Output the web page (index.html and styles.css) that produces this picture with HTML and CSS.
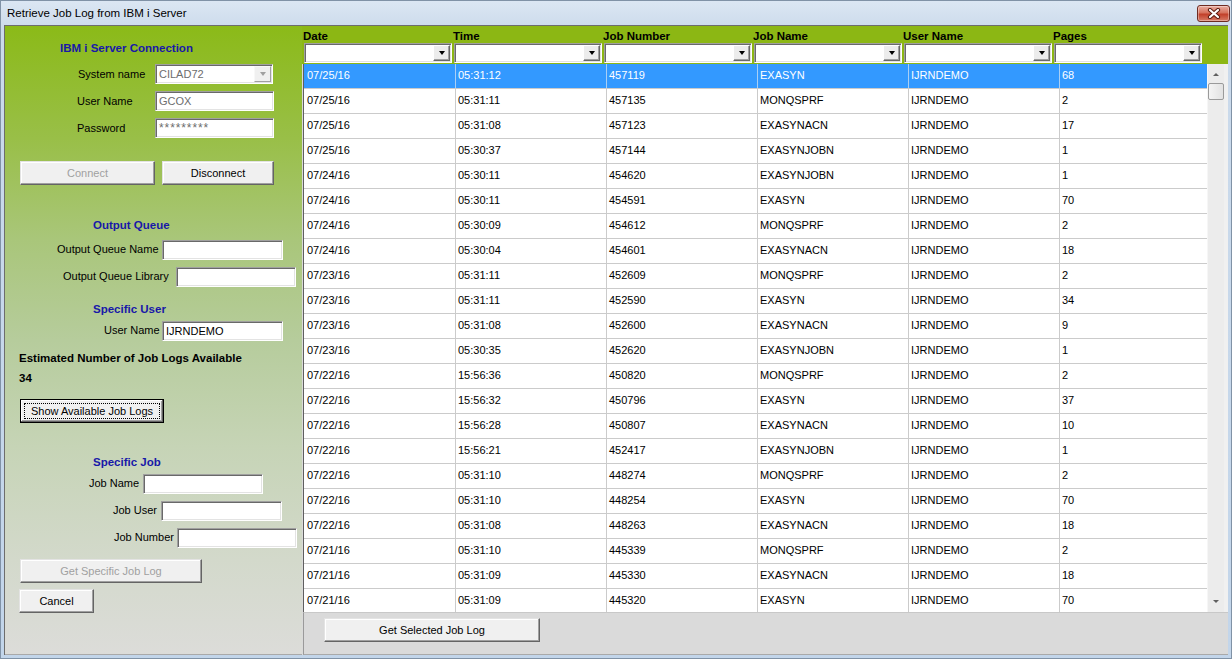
FILE: index.html
```html
<!DOCTYPE html>
<html>
<head>
<meta charset="utf-8">
<title>Retrieve Job Log from IBM i Server</title>
<link rel="stylesheet" href="styles.css">
</head>
<body>
<div class="window">
  <div class="titlebar">
    <span class="title">Retrieve Job Log from IBM i Server</span>
    <div class="close">
      <svg width="14" height="11" viewBox="0 0 14 11"><path d="M3 2 L11 9 M11 2 L3 9" stroke="#5b1b10" stroke-width="4.2" stroke-linecap="round"/><path d="M3 2 L11 9 M11 2 L3 9" stroke="#ffffff" stroke-width="2.2" stroke-linecap="round"/></svg>
    </div>
  </div>
  <div class="client">
    <div class="left">
      <div class="heading h-conn">IBM i Server Connection</div>
      <div class="field f-sys"><span class="lbl">System name</span><div class="combo dis"><span class="val">CILAD72</span><span class="drop"><i class="tri"></i></span></div></div>
      <div class="field f-user"><span class="lbl">User Name</span><div class="input dis">GCOX</div></div>
      <div class="field f-pw"><span class="lbl">Password</span><div class="input dis pw">*********</div></div>
      <div class="btnrow r-conn"><button class="btn b-connect" disabled>Connect</button><button class="btn b-disc">Disconnect</button></div>

      <div class="heading h-oq">Output Queue</div>
      <div class="field f-oqn"><span class="lbl">Output Queue Name</span><div class="input"></div></div>
      <div class="field f-oql"><span class="lbl">Output Queue Library</span><div class="input"></div></div>

      <div class="heading h-su">Specific User</div>
      <div class="field f-su"><span class="lbl">User Name</span><div class="input">IJRNDEMO</div></div>

      <div class="est">Estimated Number of Job Logs Available</div>
      <div class="est est-n">34</div>
      <div class="btnrow r-show"><button class="btn b-show focus">Show Available Job Logs</button></div>

      <div class="heading h-sj">Specific Job</div>
      <div class="field f-jn"><span class="lbl">Job Name</span><div class="input"></div></div>
      <div class="field f-ju"><span class="lbl">Job User</span><div class="input"></div></div>
      <div class="field f-jnum"><span class="lbl">Job Number</span><div class="input"></div></div>
      <div class="btnrow r-spec"><button class="btn b-spec" disabled>Get Specific Job Log</button></div>
      <div class="btnrow r-cancel"><button class="btn b-cancel">Cancel</button></div>
    </div>

    <div class="right">
      <div class="gridhead">
        <div class="hcols">
          <div class="hcol">Date</div>
          <div class="hcol">Time</div>
          <div class="hcol">Job Number</div>
          <div class="hcol">Job Name</div>
          <div class="hcol">User Name</div>
          <div class="hcol">Pages</div>
        </div>
        <div class="filters">
          <div class="fcell"><div class="fcombo"><span class="drop"><i class="tri"></i></span></div></div>
          <div class="fcell"><div class="fcombo"><span class="drop"><i class="tri"></i></span></div></div>
          <div class="fcell"><div class="fcombo"><span class="drop"><i class="tri"></i></span></div></div>
          <div class="fcell"><div class="fcombo"><span class="drop"><i class="tri"></i></span></div></div>
          <div class="fcell"><div class="fcombo"><span class="drop"><i class="tri"></i></span></div></div>
          <div class="fcell"><div class="fcombo"><span class="drop"><i class="tri"></i></span></div></div>
        </div>
      </div>

      <div class="gridbody">
        <div class="rows">
          <div class="row sel"><div class="c c1">07/25/16</div><div class="c">05:31:12</div><div class="c">457119</div><div class="c">EXASYN</div><div class="c">IJRNDEMO</div><div class="c c6">68</div></div>
          <div class="row"><div class="c c1">07/25/16</div><div class="c">05:31:11</div><div class="c">457135</div><div class="c">MONQSPRF</div><div class="c">IJRNDEMO</div><div class="c c6">2</div></div>
          <div class="row"><div class="c c1">07/25/16</div><div class="c">05:31:08</div><div class="c">457123</div><div class="c">EXASYNACN</div><div class="c">IJRNDEMO</div><div class="c c6">17</div></div>
          <div class="row"><div class="c c1">07/25/16</div><div class="c">05:30:37</div><div class="c">457144</div><div class="c">EXASYNJOBN</div><div class="c">IJRNDEMO</div><div class="c c6">1</div></div>
          <div class="row"><div class="c c1">07/24/16</div><div class="c">05:30:11</div><div class="c">454620</div><div class="c">EXASYNJOBN</div><div class="c">IJRNDEMO</div><div class="c c6">1</div></div>
          <div class="row"><div class="c c1">07/24/16</div><div class="c">05:30:11</div><div class="c">454591</div><div class="c">EXASYN</div><div class="c">IJRNDEMO</div><div class="c c6">70</div></div>
          <div class="row"><div class="c c1">07/24/16</div><div class="c">05:30:09</div><div class="c">454612</div><div class="c">MONQSPRF</div><div class="c">IJRNDEMO</div><div class="c c6">2</div></div>
          <div class="row"><div class="c c1">07/24/16</div><div class="c">05:30:04</div><div class="c">454601</div><div class="c">EXASYNACN</div><div class="c">IJRNDEMO</div><div class="c c6">18</div></div>
          <div class="row"><div class="c c1">07/23/16</div><div class="c">05:31:11</div><div class="c">452609</div><div class="c">MONQSPRF</div><div class="c">IJRNDEMO</div><div class="c c6">2</div></div>
          <div class="row"><div class="c c1">07/23/16</div><div class="c">05:31:11</div><div class="c">452590</div><div class="c">EXASYN</div><div class="c">IJRNDEMO</div><div class="c c6">34</div></div>
          <div class="row"><div class="c c1">07/23/16</div><div class="c">05:31:08</div><div class="c">452600</div><div class="c">EXASYNACN</div><div class="c">IJRNDEMO</div><div class="c c6">9</div></div>
          <div class="row"><div class="c c1">07/23/16</div><div class="c">05:30:35</div><div class="c">452620</div><div class="c">EXASYNJOBN</div><div class="c">IJRNDEMO</div><div class="c c6">1</div></div>
          <div class="row"><div class="c c1">07/22/16</div><div class="c">15:56:36</div><div class="c">450820</div><div class="c">MONQSPRF</div><div class="c">IJRNDEMO</div><div class="c c6">2</div></div>
          <div class="row"><div class="c c1">07/22/16</div><div class="c">15:56:32</div><div class="c">450796</div><div class="c">EXASYN</div><div class="c">IJRNDEMO</div><div class="c c6">37</div></div>
          <div class="row"><div class="c c1">07/22/16</div><div class="c">15:56:28</div><div class="c">450807</div><div class="c">EXASYNACN</div><div class="c">IJRNDEMO</div><div class="c c6">10</div></div>
          <div class="row"><div class="c c1">07/22/16</div><div class="c">15:56:21</div><div class="c">452417</div><div class="c">EXASYNJOBN</div><div class="c">IJRNDEMO</div><div class="c c6">1</div></div>
          <div class="row"><div class="c c1">07/22/16</div><div class="c">05:31:10</div><div class="c">448274</div><div class="c">MONQSPRF</div><div class="c">IJRNDEMO</div><div class="c c6">2</div></div>
          <div class="row"><div class="c c1">07/22/16</div><div class="c">05:31:10</div><div class="c">448254</div><div class="c">EXASYN</div><div class="c">IJRNDEMO</div><div class="c c6">70</div></div>
          <div class="row"><div class="c c1">07/22/16</div><div class="c">05:31:08</div><div class="c">448263</div><div class="c">EXASYNACN</div><div class="c">IJRNDEMO</div><div class="c c6">18</div></div>
          <div class="row"><div class="c c1">07/21/16</div><div class="c">05:31:10</div><div class="c">445339</div><div class="c">MONQSPRF</div><div class="c">IJRNDEMO</div><div class="c c6">2</div></div>
          <div class="row"><div class="c c1">07/21/16</div><div class="c">05:31:09</div><div class="c">445330</div><div class="c">EXASYNACN</div><div class="c">IJRNDEMO</div><div class="c c6">18</div></div>
          <div class="row"><div class="c c1">07/21/16</div><div class="c">05:31:09</div><div class="c">445320</div><div class="c">EXASYN</div><div class="c">IJRNDEMO</div><div class="c c6">70</div></div>
        </div>
        <div class="vscroll">
          <div class="sb-btn"><i class="tri-up"></i></div>
          <div class="thumb"></div>
          <div class="sb-track"></div>
          <div class="sb-btn"><i class="tri-down"></i></div>
        </div>
        <div class="filler"></div>
      </div>

      <div class="bottombar">
        <button class="btn b-getsel">Get Selected Job Log</button>
      </div>
    </div>
  </div>
</div>
</body>
</html>
```

FILE: styles.css
```css
* { box-sizing: border-box; }
html, body { margin: 0; padding: 0; }
body {
  width: 1232px;
  height: 659px;
  overflow: hidden;
  font-family: "Liberation Sans", Arial, sans-serif;
  font-size: 11px;
  color: #000;
  background: #c4d6ea;
}
.window {
  width: 1232px;
  height: 659px;
  display: flex;
  flex-direction: column;
  background: linear-gradient(#dce7f3, #cbdaeb 30px, #c2d5ea);
  box-shadow: inset 0 0 0 1px #8092a6;
}
.titlebar {
  height: 25px;
  flex: none;
  display: flex;
  justify-content: space-between;
  align-items: flex-start;
  padding-left: 7px;
}
.title {
  font-size: 11.5px;
  line-height: 14px;
  margin-top: 6px;
}
.close {
  width: 33px;
  height: 17px;
  margin-top: 5px;
  margin-right: 2px;
  border: 1px solid #6e2b22;
  border-radius: 3px;
  background: linear-gradient(#e9ada0, #d6725d 45%, #c2402a 55%, #d77b66);
  box-shadow: inset 0 0 0 1px rgba(255,255,255,0.35);
  display: flex;
  align-items: center;
  justify-content: center;
}
.client {
  margin: 0 4px;
  height: 630px;
  flex: none;
  display: flex;
  border-top: 1px solid #6d6d6d;
  border-left: 1px solid #6d6d6d;
}

/* ---------- left panel ---------- */
.left {
  width: 297px;
  height: 629px;
  display: flex;
  flex-direction: column;
  background: linear-gradient(#8bba18 0%, #99bf48 18%, #a9c67a 34%, #b6cc9c 50%, #c6d4b6 67%, #d3d9cb 85%, #dcdcd9 100%);
  border-bottom: 1px solid #a9a9a9;
}
.heading {
  font-weight: bold;
  font-size: 11.5px;
  line-height: 14px;
  height: 14px;
  color: #1818a8;
}
.est {
  font-weight: bold;
  font-size: 11.5px;
  line-height: 14px;
  height: 14px;
  padding-left: 14px;
}
.h-conn { margin-top: 15px; padding-left: 55px; }
.h-oq { margin-top: 33px; padding-left: 88px; }
.h-su { margin-top: 15px; padding-left: 88px; }
.est { margin-top: 10px; }
.est-n { margin-top: 6px; }
.h-sj { margin-top: 32px; padding-left: 88px; }

.field {
  display: flex;
  align-items: center;
  height: 20px;
}
.lbl {
  flex: none;
  white-space: nowrap;
  line-height: 14px;
  margin-top: -2px;
}
.f-sys { margin-top: 9px; padding-left: 73px; }
.f-sys .lbl { width: 77px; margin-top: 0; }
.f-sys .combo { width: 118px; }
.f-user { margin-top: 7px; padding-left: 72px; }
.f-user .lbl { width: 78px; margin-top: 0; }
.f-user .input { width: 119px; }
.f-pw { margin-top: 7px; padding-left: 72px; }
.f-pw .lbl { width: 78px; margin-top: 0; }
.f-pw .input { width: 119px; }
.f-oqn { margin-top: 8px; padding-left: 52px; }
.f-oqn .lbl { width: 105px; }
.f-oqn .input { width: 121px; }
.f-oql { margin-top: 7px; padding-left: 58px; }
.f-oql .lbl { width: 113px; }
.f-oql .input { width: 120px; }
.f-su { margin-top: 5px; padding-left: 99px; }
.f-su .lbl { width: 58px; }
.f-su .input { width: 121px; }
.f-jn { margin-top: 5px; padding-left: 84px; }
.f-jn .lbl { width: 54px; }
.f-jn .input { width: 120px; }
.f-ju { margin-top: 7px; padding-left: 108px; }
.f-ju .lbl { width: 48px; }
.f-ju .input { width: 121px; }
.f-jnum { margin-top: 7px; padding-left: 109px; }
.f-jnum .lbl { width: 63px; }
.f-jnum .input { width: 120px; }

.input, .combo {
  height: 20px;
  background: #fff;
  border: 1px solid;
  border-color: #a0a0a0 #ffffff #ffffff #a0a0a0;
  box-shadow: inset 1px 1px 0 #696969, inset -1px -1px 0 #e3e3e3;
  padding-left: 3px;
  line-height: 18px;
  white-space: nowrap;
  overflow: hidden;
}
.input.dis { color: #6d6d6d; }
.input.pw { letter-spacing: 0.9px; font-size: 12px; }
.combo {
  display: flex;
  justify-content: space-between;
  padding-right: 1px;
  padding-top: 1px;
}
.combo .val { line-height: 16px; color: #6d6d6d; }
.combo .drop {
  width: 17px;
  height: 16px;
  background: #f0f0f0;
  border: 1px solid;
  border-color: #f8f8f8 #a0a0a0 #a0a0a0 #f8f8f8;
  display: flex;
  align-items: center;
  justify-content: center;
}
.combo.dis .tri { border-top-color: #a0a0a0; }

.tri {
  display: block;
  width: 0;
  height: 0;
  border-left: 3.5px solid transparent;
  border-right: 3.5px solid transparent;
  border-top: 4px solid #000;
}

.btnrow { display: flex; height: 24px; }
.r-conn { margin-top: 23px; padding-left: 15px; gap: 7px; }
.r-show { margin-top: 14px; padding-left: 15px; }
.r-spec { margin-top: 11px; padding-left: 15px; }
.r-cancel { margin-top: 6px; padding-left: 14px; }

.btn {
  height: 24px;
  padding: 0;
  font-family: "Liberation Sans", Arial, sans-serif;
  font-size: 11px;
  color: #000;
  background: #f0f0f0;
  border: 1px solid;
  border-color: #e3e3e3 #646464 #646464 #e3e3e3;
  box-shadow: inset -1px -1px 0 #a0a0a0, inset 1px 1px 0 #ffffff;
}
.btn[disabled] { color: #a0a0a0; }
.btn.focus {
  border-color: #000;
  box-shadow: inset -1px -1px 0 #646464, inset 1px 1px 0 #ffffff, inset -2px -2px 0 #a0a0a0;
  outline: 1px dotted #000;
  outline-offset: -5px;
}
.b-connect { width: 135px; }
.b-disc { width: 112px; }
.b-show { width: 144px; }
.b-spec { width: 182px; }
.b-cancel { width: 75px; }

/* ---------- right panel ---------- */
.right {
  width: 926px;
  height: 629px;
  display: flex;
  flex-direction: column;
  background: #dadada;
}
.gridhead {
  height: 38px;
  flex: none;
  background: #8cb714;
  padding-left: 1px;
}
.hcols { display: flex; height: 17px; }
.hcol {
  width: 150px;
  font-weight: bold;
  font-size: 11.5px;
  padding-top: 3px;
  line-height: 14px;
  white-space: nowrap;
}
.filters { display: flex; height: 20px; }
.fcell { width: 150px; padding-left: 1px; }
.fcombo {
  width: 148px;
  height: 20px;
  background: #fff;
  border: 1px solid;
  border-color: #a0a0a0 #ffffff #ffffff #a0a0a0;
  box-shadow: inset 1px 1px 0 #696969, inset -1px -1px 0 #e3e3e3;
  display: flex;
  justify-content: flex-end;
  padding: 1px 1px 0 0;
}
.fcombo .drop {
  width: 17px;
  height: 16px;
  background: #ececec;
  border: 1px solid;
  border-color: #ffffff #696969 #696969 #ffffff;
  box-shadow: inset -1px -1px 0 #a0a0a0;
  display: flex;
  align-items: center;
  justify-content: center;
}

.gridbody {
  height: 548px;
  flex: none;
  margin-left: 1px;
  border-left: 1px solid #5f5f5f;
  display: flex;
  background: #fff;
  overflow: hidden;
}
.rows {
  width: 903px;
  flex: none;
  overflow: hidden;
}
.row {
  display: flex;
  height: 25px;
  border-bottom: 1px solid #cbcbcb;
}
.c {
  width: 151px;
  flex: none;
  line-height: 23px;
  padding-left: 2px;
  border-right: 1px solid #cbcbcb;
  white-space: nowrap;
  overflow: hidden;
}
.c1 { width: 152px; padding-left: 3px; }
.c6 { width: 147px; border-right: none; }
.row.sel { background: #3399ff; color: #fff; border-bottom-color: #cbcbcb; }
.row.sel .c { border-right-color: #a9cff5; }

.vscroll {
  width: 17px;
  flex: none;
  display: flex;
  flex-direction: column;
  background: #ececec;
  border-left: 1px solid #f6f6f6;
  padding: 1px 0 2px 0;
}
.sb-btn {
  height: 18px;
  display: flex;
  align-items: center;
  justify-content: center;
}
.tri-up, .tri-down {
  display: block;
  width: 0;
  height: 0;
  border-left: 3px solid transparent;
  border-right: 3px solid transparent;
}
.tri-up { border-bottom: 3px solid #606060; }
.tri-down { border-top: 3px solid #606060; }
.thumb {
  height: 17px;
  border: 1px solid #9a9a9a;
  border-radius: 2px;
  background: linear-gradient(90deg, #f4f4f4, #e2e2e2);
}
.sb-track { flex: 1; }
.filler {
  width: 4px;
  flex: none;
  background: #f0f0f0;
}

.bottombar {
  flex: 1;
  margin-left: 1px;
  border-left: 1px solid #9a9a9a;
  border-bottom: 1px solid #a9a9a9;
  border-top: 1px solid #c8c8c8;
  padding: 5px 0 0 20px;
}
.b-getsel { width: 216px; }
```
